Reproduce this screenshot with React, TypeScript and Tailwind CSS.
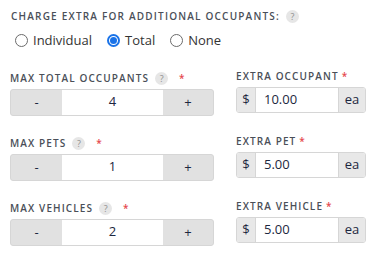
import { useState } from 'react'

function Help() {
  return (
    <span className="inline-flex h-[13px] w-[13px] items-center justify-center rounded-full bg-[#e6e6e6] text-[9px] font-normal leading-none tracking-normal text-[#8f8f8f]">
      ?
    </span>
  )
}

function Label({ text, help }: { text: string; help?: boolean }) {
  return (
    <div className="flex h-[19px] items-center gap-[6px] pt-[5px] text-[10px] font-semibold uppercase tracking-[0.11em] text-[#4a4f58]">
      <span>{text}</span>
      {help && <Help />}
      <span className={help ? 'ml-[5px] text-[#e5484d]' : '-ml-[3px] text-[#e5484d]'}>*</span>
    </div>
  )
}

function Stepper({ label, value }: { label: string; value: number }) {
  return (
    <div className="flex flex-col gap-[3px]">
      <Label text={label} help />
      <div className="flex h-[27px] overflow-hidden rounded-[3px] border border-[#d6d6d6] bg-[#e1e1e1] text-[13px] text-[#1d2740]">
        <button className="w-[51px] leading-none">-</button>
        <div className="flex flex-1 items-center justify-center bg-white">{value}</div>
        <button className="w-[50px] leading-none">+</button>
      </div>
    </div>
  )
}

function Money({ label, value }: { label: string; value: string }) {
  return (
    <div className="flex flex-col gap-[3px]">
      <Label text={label} />
      <div className="flex h-[26px] overflow-hidden rounded-[3px] border border-[#d6d6d6] text-[13px] text-[#1d2740]">
        <span className="flex w-[19px] items-center justify-center border-r border-[#d6d6d6] bg-[#e8e8e8]">$</span>
        <span className="flex flex-1 items-center bg-white pl-[8px]">{value}</span>
        <span className="flex w-[27px] items-center justify-center border-l border-[#d6d6d6] bg-[#e8e8e8]">ea</span>
      </div>
    </div>
  )
}

function Radio({ label, checked, onClick }: { label: string; checked: boolean; onClick: () => void }) {
  return (
    <label className="flex cursor-pointer items-center gap-[5px]" onClick={onClick}>
      <span
        className={
          checked
            ? 'flex h-[13px] w-[13px] items-center justify-center rounded-full border-2 border-[#1a73e8]'
            : 'h-[13px] w-[13px] rounded-full border border-[#6b6b6b]'
        }
      >
        {checked && <span className="h-[7px] w-[7px] rounded-full bg-[#1a73e8]" />}
      </span>
      <span>{label}</span>
    </label>
  )
}

export default function App() {
  const [mode, setMode] = useState('Total')
  return (
    <div className="h-[254px] w-[378px] bg-white px-[10px] pt-[9px] font-['Open_Sans',sans-serif]">
      <div className="flex items-center gap-[6px] pl-[1px] text-[10px] font-semibold uppercase tracking-[0.12em] text-[#4a4f58]">
        <span>Charge extra for additional occupants:</span>
        <Help />
      </div>
      <div className="mt-[7px] flex items-center gap-[15px] pl-[5px] text-[13px] text-[#333]">
        {['Individual', 'Total', 'None'].map((m) => (
          <Radio key={m} label={m} checked={mode === m} onClick={() => setMode(m)} />
        ))}
      </div>
      <div className="mt-[16px] grid grid-cols-[204px_130px] gap-x-[22px]">
        <div className="flex flex-col gap-[16px]">
          <Stepper label="Max total occupants" value={4} />
          <Stepper label="Max pets" value={1} />
          <Stepper label="Max vehicles" value={2} />
        </div>
        <div className="-mt-[2px] flex flex-col gap-[17px]">
          <Money label="Extra occupant" value="10.00" />
          <Money label="Extra pet" value="5.00" />
          <Money label="Extra vehicle" value="5.00" />
        </div>
      </div>
    </div>
  )
}
